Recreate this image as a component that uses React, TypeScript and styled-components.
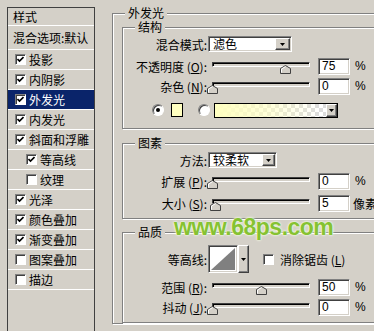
import React from 'react';
import styled, { createGlobalStyle } from 'styled-components';

const GlobalStyle = createGlobalStyle`
  html, body {
    margin: 0;
    padding: 0;
    background: #d4d0c8;
    overflow: hidden;
  }
  body {
    font-family: "Noto Sans CJK SC", "Liberation Sans", sans-serif;
    font-size: 12px;
    color: #000;
  }
`;

const Page = styled.div`
  position: relative;
  width: 374px;
  height: 331px;
  overflow: hidden;
  display: flex;
  align-items: flex-start;
`;

/* ---------- left style list ---------- */

const StyleList = styled.div`
  margin: 7px 0 0 7px;
  width: 88px;
  height: 340px;
  flex-shrink: 0;
  box-sizing: border-box;
  border: 1px solid #404040;
  display: flex;
  flex-direction: column;
`;

const ListHeader = styled.div`
  height: 17px;
  line-height: 17px;
  padding-left: 5px;
  border-bottom: 1px solid #fff;
`;

const ListRow = styled.div<{ $active?: boolean; $indent?: number; $h?: number }>`
  height: ${p => p.$h ?? 19}px;
  display: flex;
  align-items: center;
  gap: 3px;
  padding-left: ${p => p.$indent ?? 7}px;
  border-bottom: 1px solid #fff;
  background: ${p => (p.$active ? '#0a246a' : 'transparent')};
  color: ${p => (p.$active ? '#fff' : '#000')};
  white-space: nowrap;
  overflow: hidden;
`;

const CheckBox = styled.span`
  width: 11px;
  height: 11px;
  flex-shrink: 0;
  box-sizing: border-box;
  background: #fff;
  border: 1px solid;
  border-color: #808080 #fff #fff #808080;
  box-shadow: inset 1px 1px 0 #404040;
  display: flex;
  align-items: center;
  justify-content: center;
`;

const Check = () => (
  <svg width="7" height="7" viewBox="0 0 7 7">
    <path d="M0.5 3 L2.5 5 L6.5 1" fill="none" stroke="#000" strokeWidth="1.6" />
  </svg>
);

/* ---------- right panel ---------- */

const Panel = styled.fieldset`
  margin: 6px 0 0 17px;
  padding: 0 9px;
  width: 290px;
  flex-shrink: 0;
  min-width: 0;
  border: 1px solid #808080;
  box-shadow: inset 1px 1px 0 #fff, 1px 1px 0 #fff;
`;

const Group = styled.fieldset<{ $mt: number; $pb: number }>`
  margin: ${p => p.$mt}px 0 0 0;
  padding: 0 0 ${p => p.$pb}px 0;
  min-width: 0;
  border: 1px solid #808080;
  box-shadow: inset 1px 1px 0 #fff, 1px 1px 0 #fff;
`;

const Legend = styled.legend<{ $ml: number }>`
  margin-left: ${p => p.$ml}px;
  padding: 0 3px;
  height: 14px;
  line-height: 14px;
  background: #d4d0c8;
`;

const Row = styled.div<{ $mt?: number; $h?: number }>`
  display: flex;
  align-items: center;
  height: ${p => p.$h ?? 20}px;
  margin-top: ${p => p.$mt ?? 0}px;
  white-space: nowrap;
`;

const Label = styled.span`
  width: 85px;
  flex-shrink: 0;
  box-sizing: border-box;
  padding-right: 1px;
  text-align: right;
`;

const Key = styled.span`
  text-decoration: underline;
`;

const Sunken = styled.div<{ $w: number; $h: number }>`
  width: ${p => p.$w}px;
  height: ${p => p.$h}px;
  flex-shrink: 0;
  box-sizing: border-box;
  background: #fff;
  border: 1px solid;
  border-color: #808080 #fff #fff #808080;
  box-shadow: inset 1px 1px 0 #404040, inset -1px -1px 0 #d4d0c8;
`;

const Select = styled(Sunken)`
  display: flex;
  align-items: center;
  padding: 1px;
  justify-content: space-between;
`;

const SelectText = styled.span`
  padding-left: 3px;
  line-height: 12px;
`;

const ArrowButton = styled.span<{ $w: number; $h: number }>`
  width: ${p => p.$w}px;
  height: ${p => p.$h}px;
  flex-shrink: 0;
  box-sizing: border-box;
  background: #d4d0c8;
  border: 1px solid;
  border-color: #fff #404040 #404040 #fff;
  box-shadow: inset -1px -1px 0 #808080;
  display: flex;
  align-items: center;
  justify-content: center;
`;

const Arrow = () => (
  <svg width="5" height="3" viewBox="0 0 5 3">
    <path d="M0 0 H5 L2.5 3 Z" fill="#000" />
  </svg>
);

const ValueBox = styled(Sunken)`
  margin-left: 3px;
  padding-left: 3px;
  font-family: "Liberation Sans", Arial, sans-serif;
  font-size: 12px;
  line-height: 15px;
`;

const Unit = styled.span`
  margin-left: 5px;
  font-family: "Liberation Sans", Arial, sans-serif;
`;

const UnitCjk = styled.span`
  margin-left: 3px;
`;

const SliderBox = styled.div`
  position: relative;
  width: 107px;
  height: 20px;
  flex-shrink: 0;
`;

const Track = styled.div`
  margin: 6px 0 0 4px;
  width: 98px;
  height: 5px;
  box-sizing: border-box;
  border: 1px solid;
  border-color: #404040 #fff #fff #404040;
  box-shadow: inset 1px 1px 0 #000;
  background: #d4d0c8;
`;

const Thumb = styled.svg`
  position: absolute;
  top: 9px;
`;

const Slider = ({ pct }: { pct: number }) => (
  <SliderBox>
    <Track />
    <Thumb width="11" height="9" viewBox="0 0 11 9" style={{ left: 4 + pct * 98 - 5.5 }}>
      <path d="M0.5 8.5 V3.5 L5.5 0.5 L10.5 3.5 V8.5 Z" fill="#d4d0c8" stroke="#404040" />
      <path d="M1.5 7.5 V4 L5.5 1.6" fill="none" stroke="#fff" />
    </Thumb>
  </SliderBox>
);

const SliderRow = ({
  label,
  keyChar,
  pct,
  value,
  unit,
  mt,
}: {
  label: string;
  keyChar: string;
  pct: number;
  value: string;
  unit: string;
  mt?: number;
}) => (
  <Row $mt={mt}>
    <Label>
      {label} (<Key>{keyChar}</Key>):
    </Label>
    <Slider pct={pct} />
    <ValueBox $w={32} $h={17}>{value}</ValueBox>
    {unit === '%' ? <Unit>%</Unit> : <UnitCjk>{unit}</UnitCjk>}
  </Row>
);

const Radio = styled.span<{ $on?: boolean; $ml: number }>`
  margin-left: ${p => p.$ml}px;
  width: 12px;
  height: 12px;
  flex-shrink: 0;
  box-sizing: border-box;
  border-radius: 50%;
  background: #fff;
  border: 1px solid;
  border-color: #808080 #fff #fff #808080;
  box-shadow: inset 1px 1px 0 #404040;
  display: flex;
  align-items: center;
  justify-content: center;

  &::after {
    content: '';
    display: ${p => (p.$on ? 'block' : 'none')};
    width: 4px;
    height: 4px;
    border-radius: 50%;
    background: #000;
  }
`;

const Swatch = styled.span`
  margin-left: 7px;
  width: 12px;
  height: 14px;
  flex-shrink: 0;
  box-sizing: border-box;
  border: 1px solid #000;
  background: #ffffc0;
`;

const GradientBox = styled.div`
  margin-left: 4px;
  width: 124px;
  height: 15px;
  box-sizing: border-box;
  border: 1px solid #000;
  display: flex;
  justify-content: flex-end;
  background:
    linear-gradient(to right, #ffffc0 0%, rgba(255, 255, 192, 0.6) 45%, rgba(255, 255, 192, 0) 85%),
    repeating-conic-gradient(#dcdcdc 0 25%, #fff 0 50%) 0 0 / 8px 8px;
`;

const ContourBox = styled(Sunken)`
  padding: 2px;
  display: flex;
`;

const ContourLabel = styled.span`
  margin-left: 6px;
`;

const Watermark = styled.div`
  position: absolute;
  left: 174px;
  top: 213px;
  font-family: "Liberation Sans", Arial, sans-serif;
  font-weight: bold;
  font-size: 23px;
  line-height: 28px;
  letter-spacing: -0.5px;
  color: #86c232;
  text-shadow: 0 0 1px #f4fbe6, 0 0 2px #f4fbe6, 0 0 3px #eef8dc;
  pointer-events: none;
`;

const items: { name: string; on: boolean; indent?: number; active?: boolean }[] = [
  { name: '投影', on: true },
  { name: '内阴影', on: true },
  { name: '外发光', on: true, active: true },
  { name: '内发光', on: true },
  { name: '斜面和浮雕', on: true },
  { name: '等高线', on: true, indent: 18 },
  { name: '纹理', on: false, indent: 18 },
  { name: '光泽', on: true },
  { name: '颜色叠加', on: true },
  { name: '渐变叠加', on: true },
  { name: '图案叠加', on: false },
  { name: '描边', on: false },
];

const App = (): JSX.Element => (
  <Page>
    <GlobalStyle />
    <StyleList>
      <ListHeader>样式</ListHeader>
      <ListRow $h={23} $indent={5}>混合选项:默认</ListRow>
      {items.map(it => (
        <ListRow key={it.name} $active={it.active} $indent={it.indent}>
          <CheckBox>{it.on && <Check />}</CheckBox>
          {it.name}
        </ListRow>
      ))}
    </StyleList>

    <Panel>
      <Legend $ml={3}>外发光</Legend>

      <Group $mt={0} $pb={9}>
        <Legend $ml={12}>结构</Legend>
        <Row $mt={1} $h={18}>
          <Label>混合模式:</Label>
          <Select $w={84} $h={16}>
            <SelectText>滤色</SelectText>
            <ArrowButton $w={15} $h={12}><Arrow /></ArrowButton>
          </Select>
        </Row>
        <SliderRow label="不透明度" keyChar="O" pct={0.75} value="75" unit="%" mt={3} />
        <SliderRow label="杂色" keyChar="N" pct={0} value="0" unit="%" />
        <Row $mt={5} $h={18}>
          <Radio $on $ml={29} />
          <Swatch />
          <Radio $ml={15} />
          <GradientBox>
            <ArrowButton $w={11} $h={13}><Arrow /></ArrowButton>
          </GradientBox>
        </Row>
      </Group>

      <Group $mt={7} $pb={5}>
        <Legend $ml={12}>图素</Legend>
        <Row $mt={1} $h={18}>
          <Label>方法:</Label>
          <Select $w={69} $h={16}>
            <SelectText>较柔软</SelectText>
            <ArrowButton $w={13} $h={12}><Arrow /></ArrowButton>
          </Select>
        </Row>
        <SliderRow label="扩展" keyChar="P" pct={0} value="0" unit="%" mt={2} />
        <SliderRow label="大小" keyChar="S" pct={0.04} value="5" unit="像素" mt={2} />
      </Group>

      <Group $mt={6} $pb={5}>
        <Legend $ml={12}>品质</Legend>
        <Row $mt={5} $h={30}>
          <Label>等高线:</Label>
          <ContourBox $w={30} $h={28}>
            <svg width="24" height="22" viewBox="0 0 24 22" preserveAspectRatio="none">
              <rect width="24" height="22" fill="#fff" />
              <path d="M0 22 L24 0 V22 Z" fill="#808080" />
            </svg>
          </ContourBox>
          <ArrowButton $w={11} $h={28}><Arrow /></ArrowButton>
          <CheckBox style={{ marginLeft: 14 }} />
          <ContourLabel>消除锯齿 (<Key>L</Key>)</ContourLabel>
        </Row>
        <SliderRow label="范围" keyChar="R" pct={0.5} value="50" unit="%" mt={3} />
        <SliderRow label="抖动" keyChar="J" pct={0} value="0" unit="%" />
      </Group>
    </Panel>

    <Watermark>www.68ps.com</Watermark>
  </Page>
);

export default App;
